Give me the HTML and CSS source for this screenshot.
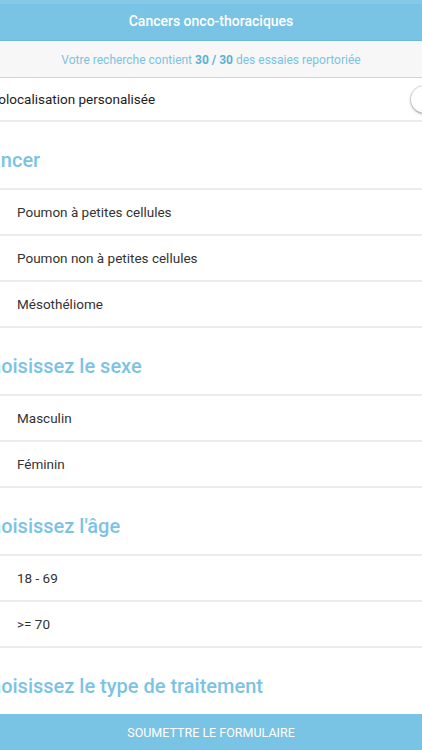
FILE: index.html
```html
<!DOCTYPE html>
<html lang="fr">
<head>
    <meta charset="UTF-8">
    <meta name="viewport" content="width=device-width, initial-scale=1.0">
    <title>Cancers onco-thoraciques</title>
    <link rel="stylesheet" href="styles.css">
</head>
<body>
    <div id="app">
        <div id="titlebar">Cancers onco-thoraciques</div>
        <div id="summary">Votre recherche contient <b>30 / 30</b> des essaies reportoriée</div>

        <div id="form-scroll">
            <div class="form-content">
                <div class="switch-row">
                    <span class="switch-label">Géolocalisation personalisée</span>
                    <span class="switch"><span class="knob"></span></span>
                </div>

                <h2 class="section-title">Cancer</h2>
                <ul class="options">
                    <li>Poumon à petites cellules</li>
                    <li>Poumon non à petites cellules</li>
                    <li>Mésothéliome</li>
                </ul>

                <h2 class="section-title">Choisissez le sexe</h2>
                <ul class="options">
                    <li>Masculin</li>
                    <li>Féminin</li>
                </ul>

                <h2 class="section-title">Choisissez l'âge</h2>
                <ul class="options">
                    <li>18 - 69</li>
                    <li>&gt;= 70</li>
                </ul>

                <h2 class="section-title">Choisissez le type de traitement</h2>
            </div>
        </div>

        <button id="submit">SOUMETTRE LE FORMULAIRE</button>
    </div>
</body>
</html>
```

FILE: styles.css
```css
html, body {
    margin: 0;
    padding: 0;
    background: #fff;
    overflow: hidden;
    font-family: Roboto, "Liberation Sans", sans-serif;
}
#app {
    width: 422px;
    height: 750px;
    display: flex;
    flex-direction: column;
}
#titlebar {
    background-color: #79c3e4;
    border-top: 4px solid #86c9e6;
    border-bottom: 1px solid #6fb8d8;
    color: #fff;
    font-size: 14px;
    font-weight: 500;
    text-align: center;
    height: 36px;
    line-height: 35px;
}
#summary {
    background-color: #f7f7f7;
    border-bottom: 1px solid #d6d6d6;
    color: #7cc2e2;
    font-size: 12px;
    text-align: center;
    height: 36px;
    line-height: 38px;
}
#summary b {
    font-weight: 700;
    color: #5fb0d4;
}
#form-scroll {
    flex: 1;
    overflow: hidden;
}
.form-content {
    margin-left: -23px;
    margin-right: -60px;
}
.switch-row {
    display: flex;
    align-items: center;
    justify-content: space-between;
    height: 42px;
    padding: 0 20px 0 5px;
    border-bottom: 2px solid #ebebeb;
    font-size: 13.5px;
    color: #222;
}
.switch {
    width: 50px;
    height: 27px;
    border-radius: 14px;
    border: 1px solid #e2e2e2;
    position: relative;
    background: #fff;
}
.knob {
    position: absolute;
    left: 0;
    top: 0;
    width: 27px;
    height: 27px;
    border-radius: 50%;
    background: #fff;
    box-shadow: 0 1px 3px rgba(0, 0, 0, 0.35);
}
.section-title {
    margin: 0;
    padding: 26px 0 16px 0;
    font-size: 20px;
    line-height: 24px;
    font-weight: 500;
    color: #7cc3e3;
}
.options {
    list-style: none;
    margin: 0;
    padding: 0;
    border-top: 2px solid #ebebeb;
}
.options li {
    height: 44px;
    line-height: 45px;
    padding-left: 40px;
    border-bottom: 2px solid #ebebeb;
    font-size: 13.5px;
    color: #333;
}
#submit {
    height: 36px;
    border: none;
    margin: 0;
    background-color: #79c3e4;
    color: #fff;
    font-family: Roboto, "Liberation Sans", sans-serif;
    font-size: 12.5px;
}
```
